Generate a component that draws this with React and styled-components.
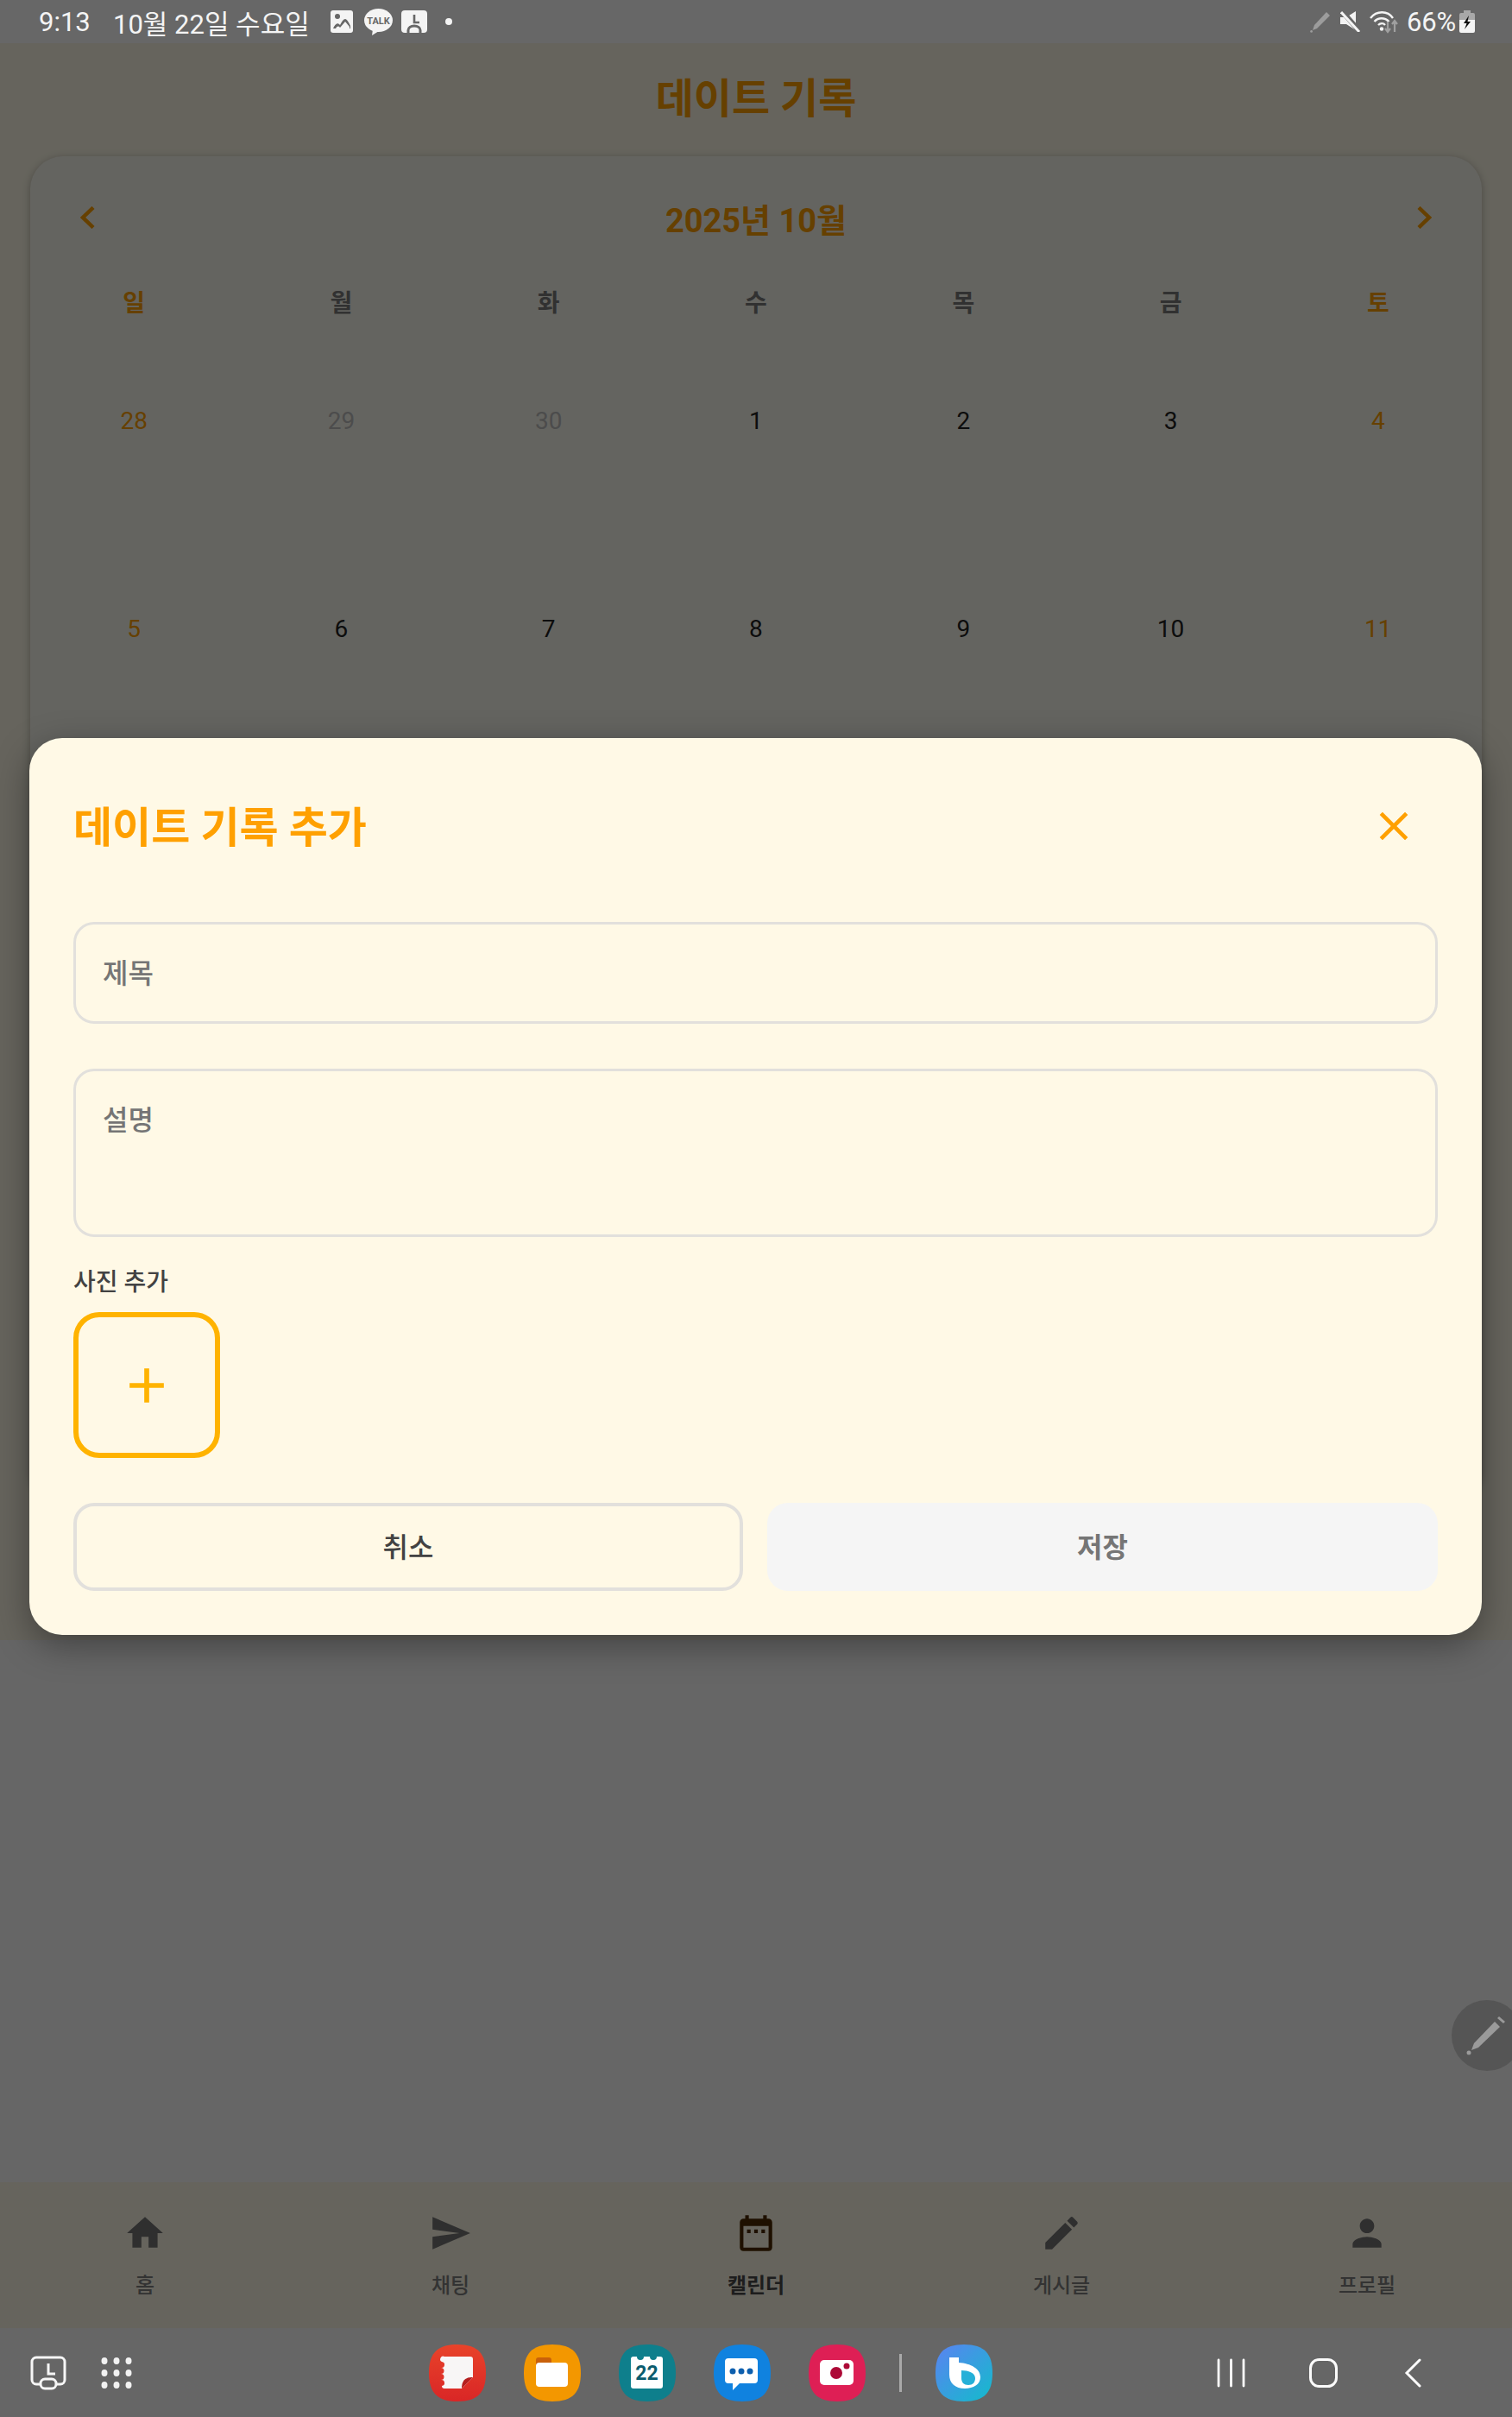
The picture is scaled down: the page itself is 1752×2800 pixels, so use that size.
import styled, { createGlobalStyle } from 'styled-components';

const GlobalStyle = createGlobalStyle`
  html, body {
    margin: 0;
    padding: 0;
    background: #666;
  }
  * {
    box-sizing: border-box;
  }
  body {
    font-family: Roboto, "Noto Sans CJK KR", sans-serif;
  }
`;

const Device = styled.div`
  width: 1752px;
  height: 2800px;
  display: flex;
  flex-direction: column;
  position: relative;
  overflow: hidden;
`;

/* status bar */
const StatusBar = styled.div`
  height: 50px;
  flex: none;
  background: #676767;
  color: #f4f4f4;
  display: flex;
  align-items: center;
  padding: 0 43px 0 45px;
  font-size: 31px;
  font-weight: 400;
`;

const StatusTime = styled.span`
  width: 86px;
`;

const StatusDate = styled.span`
  width: 252px;
  white-space: nowrap;
`;

const StatusIcons = styled.div`
  display: flex;
  align-items: center;
  gap: ${(p) => p.$gap || 10}px;
`;

const StatusRight = styled(StatusIcons)`
  margin-left: auto;
`;

const Percent = styled.span`
  margin: 0 -6px 0 -1px;
  letter-spacing: -0.2px;
`;

/* app screen */
const Screen = styled.div`
  height: 2647px;
  flex: none;
  display: flex;
  flex-direction: column;
  position: relative;
  background: #fff;
`;

const Page = styled.div`
  height: 1850px;
  flex: none;
  background: #fefae8;
  overflow: hidden;
`;

const PageTitle = styled.h1`
  margin: 0;
  height: 131px;
  padding-top: 35px;
  text-align: center;
  font-size: 48px;
  line-height: 60px;
  font-weight: 700;
  color: #ffa000;
`;

const CalendarCard = styled.div`
  margin: 0 35px;
  padding-top: 46px;
  background: #fbfaf0;
  border-radius: 38px;
  box-shadow: 0 2px 10px rgba(0, 0, 0, 0.28);
  height: 1560px;
`;

const CalendarHead = styled.div`
  height: 50px;
  padding: 0 58px;
  margin-bottom: 52px;
  display: flex;
  align-items: center;
  justify-content: space-between;
`;

const Month = styled.div`
  font-size: 38px;
  font-weight: 700;
  color: #ffa000;
`;

const Chevron = styled.svg`
  width: 17px;
  height: 26px;
  fill: none;
  stroke: #ffa000;
  stroke-width: 4.5;
`;

const WeekGrid = styled.div`
  display: grid;
  grid-template-columns: repeat(7, 1fr);
  height: 38px;
  align-items: center;
`;

const WeekDay = styled.div`
  text-align: center;
  font-size: 28px;
  font-weight: 700;
  color: ${(p) => (p.$weekend ? '#ffa000' : '#7a7a7a')};
`;

const DayGrid = styled.div`
  display: grid;
  grid-template-columns: repeat(7, 1fr);
  grid-auto-rows: 241px;
`;

const Day = styled.div`
  display: flex;
  align-items: center;
  justify-content: center;
  font-size: 28px;
  color: ${(p) => p.$color};
`;

const Filler = styled.div`
  flex: 1;
  background: #fff;
`;

const BottomNav = styled.nav`
  height: 169px;
  flex: none;
  background: #fefae8;
  display: grid;
  grid-template-columns: repeat(5, 354px);
  justify-content: center;
`;

const NavItem = styled.div`
  display: flex;
  flex-direction: column;
  align-items: center;
  padding-top: 34px;
  color: ${(p) => (p.$active ? '#4a4a4a' : '#808080')};
  font-size: 24px;
  line-height: 30px;
  font-weight: ${(p) => (p.$active ? 700 : 500)};
`;

const NavIcon = styled.svg`
  width: 50px;
  height: 50px;
  margin-bottom: 21px;
  fill: ${(p) => (p.$active ? '#4c2a00' : '#757575')};
`;

/* dialog */
const Scrim = styled.div`
  position: absolute;
  inset: 0;
  background: rgba(0, 0, 0, 0.6);
  padding: 805px 35px 0 34px;
`;

const Modal = styled.div`
  display: flex;
  flex-direction: column;
  padding: 52px 51px 51px 51px;
  background: #fff9e6;
  border-radius: 38px;
  box-shadow: 0 12px 40px rgba(0, 0, 0, 0.36);
`;

const ModalHead = styled.div`
  height: 100px;
  margin-bottom: 61px;
  display: flex;
  align-items: center;
  justify-content: space-between;
`;

const ModalTitle = styled.h2`
  margin: 0;
  padding-bottom: 5px;
  font-size: 49px;
  font-weight: 700;
  color: #ffa000;
`;

const CloseButton = styled.button`
  width: 102px;
  height: 100px;
  padding: 0;
  border: 0;
  background: none;
  display: flex;
  align-items: center;
  justify-content: center;
`;

const CloseIcon = styled.svg`
  width: 56px;
  height: 56px;
  fill: #ffa000;
`;

const Field = styled.label`
  display: block;
  height: ${(p) => p.$height}px;
  margin-bottom: ${(p) => p.$gap}px;
  padding: 37px 31px 0;
  border: 3px solid #e2e0dc;
  border-radius: 24px;
  font-size: 32px;
  line-height: 40px;
  font-weight: 500;
  color: #757575;
`;

const PhotoLabel = styled.div`
  font-size: 28px;
  line-height: 34px;
  font-weight: 500;
  margin: 36px 0 17px;
  color: #424242;
`;

const AddPhoto = styled.button`
  width: 170px;
  height: 169px;
  padding: 0;
  margin-bottom: 52px;
  border: 6px solid #ffb300;
  border-radius: 30px;
  background: none;
  display: flex;
  align-items: center;
  justify-content: center;
`;

const PlusIcon = styled.svg`
  width: 68px;
  height: 68px;
  fill: #ffb300;
`;

const Actions = styled.div`
  display: grid;
  grid-template-columns: 776px 777px;
  gap: 28px;
`;

const ActionButton = styled.button`
  height: 102px;
  padding: 0 0 5px;
  border-radius: 24px;
  font-family: inherit;
  font-size: 32px;
  font-weight: ${(p) => (p.$ghost ? 500 : 700)};
  border: ${(p) => (p.$ghost ? '4px solid #e2e0dc' : '0')};
  background: ${(p) => (p.$ghost ? 'transparent' : '#f5f5f5')};
  color: ${(p) => (p.$ghost ? '#424242' : '#757575')};
`;

/* s-pen shortcut floats over everything */
const PenBubble = styled.div`
  position: absolute;
  left: 1682px;
  top: 2317px;
  width: 82px;
  height: 82px;
  border-radius: 50%;
  background: #555;
  display: flex;
  align-items: center;
  justify-content: center;
`;

/* samsung dock */
const Dock = styled.div`
  height: 103px;
  flex: none;
  background: #666;
  display: flex;
  align-items: center;
  padding-left: 35px;
`;

const DockTools = styled.div`
  display: flex;
  align-items: center;
  gap: 40px;
  margin-right: 344px;
`;

const DockApps = styled.div`
  display: flex;
  align-items: center;
  gap: 44px;
  margin-right: 260px;
`;

const AppIcon = styled.svg`
  width: 66px;
  height: 66px;
  display: block;
`;

const DockDivider = styled.div`
  width: 3px;
  height: 44px;
  margin: 0 -5px;
  background: #a9a9a9;
`;

const DockNav = styled.div`
  display: flex;
  align-items: center;
  gap: 74px;
`;

const BackIcon = styled.svg`
  margin-left: 3px;
`;

const SQUIRCLE = 'M33 0C57 0 66 11 66 33S57 66 33 66 0 55 0 33 9 0 33 0Z';

const weekDays = ['일', '월', '화', '수', '목', '금', '토'];

const days = [
  28, 29, 30, 1, 2, 3, 4, 5, 6, 7, 8, 9, 10, 11, 12, 13, 14, 15, 16, 17, 18, 19, 20, 21, 22, 23,
  24, 25, 26, 27, 28, 29, 30, 31, 1,
];

const dayColor = (i) => {
  if (i === 1 || i === 2 || i === 34) return '#bdbdbd';
  if (i % 7 === 0 || i % 7 === 6) return '#ffa000';
  return '#212121';
};

const navItems = [
  { label: '홈', d: 'M10 20v-6h4v6h5v-8h3L12 3 2 12h3v8z' },
  { label: '채팅', d: 'M2.01 21 23 12 2.01 3 2 10l15 2-15 2z' },
  {
    label: '캘린더',
    active: true,
    d: 'M19 4h-1V2h-2v2H8V2H6v2H5C3.9 4 3 4.9 3 6v14c0 1.1.9 2 2 2h14c1.1 0 2-.9 2-2V6c0-1.1-.9-2-2-2zm0 16H5V8h14zM7 10h2v2H7zM11 10h2v2h-2zM15 10h2v2h-2z',
  },
  {
    label: '게시글',
    d: 'M3 17.25V21h3.75L17.81 9.94l-3.75-3.75L3 17.25zM20.71 7.04c.39-.39.39-1.02 0-1.41l-2.34-2.34a.996.996 0 0 0-1.41 0l-1.83 1.83 3.75 3.75 1.83-1.83z',
  },
  {
    label: '프로필',
    d: 'M12 12c2.21 0 4-1.79 4-4s-1.79-4-4-4-4 1.79-4 4 1.79 4 4 4zm0 2c-2.67 0-8 1.34-8 4v2h16v-2c0-2.66-5.33-4-8-4z',
  },
];

const Status = () => (
  <StatusBar>
    <StatusTime>9:13</StatusTime>
    <StatusDate>10월 22일 수요일</StatusDate>
    <StatusIcons $gap={13}>
      <svg width="26" height="26" viewBox="0 0 26 26">
        <rect width="26" height="26" rx="3" fill="#f4f4f4" />
        <circle cx="8" cy="7" r="3" fill="#676767" />
        <path d="M3 21c2-5 5-8 8-4 2-4 4-7 6-7s4 4 6 8v3z" fill="#676767" />
        <path d="M6 21c2-3 3-3 5-1l6-7 5 6v2z" fill="#f4f4f4" />
      </svg>
      <svg width="33" height="31" viewBox="0 0 33 31">
        <ellipse cx="16.5" cy="13.5" rx="16.5" ry="13.5" fill="#f4f4f4" />
        <path d="M10 24l-1 7 8-5z" fill="#f4f4f4" />
        <text x="16.5" y="17.5" textAnchor="middle" fontSize="11" fontWeight="700" fontFamily="Roboto" fill="#676767">TALK</text>
      </svg>
      <svg width="30" height="26" viewBox="0 0 30 26" style={{ marginLeft: -3 }}>
        <rect width="30" height="26" rx="4" fill="#f4f4f4" />
        <path d="M15 5v9h6" fill="none" stroke="#676767" strokeWidth="2.6" />
        <path d="M8 26v-3c0-3 3-5 7-5s7 2 7 5v3" fill="#f4f4f4" stroke="#676767" strokeWidth="3" />
      </svg>
      <svg width="8" height="8" viewBox="0 0 8 8" style={{ marginLeft: 8 }}>
        <circle cx="4" cy="4" r="4" fill="#f4f4f4" />
      </svg>
    </StatusIcons>
    <StatusRight>
      <svg width="25" height="26" viewBox="0 0 25 26">
        <path d="M19 2l4 4L8 21l-5 2 2-6z" fill="#9c9c9c" />
        <circle cx="1.6" cy="24.4" r="1.4" fill="#9c9c9c" />
      </svg>
      <svg width="24" height="24" viewBox="0 0 24 24">
        <path d="M0 7h7L18 0v22L7 15H0z" fill="#f4f4f4" />
        <path d="M3 1l20 23" stroke="#676767" strokeWidth="6" />
        <path d="M1 1l21 23" stroke="#f4f4f4" strokeWidth="3" />
      </svg>
      <svg width="34" height="27" viewBox="0 0 34 27" fill="none">
        <path d="M1 9c7-9 20-9 26 0" stroke="#f4f4f4" strokeWidth="2.4" />
        <path d="M5.500 13c4.500-5 12-5 17 0" stroke="#f4f4f4" strokeWidth="2.4" />
        <path d="M10 17c2.500-2.500 6-2.500 8 0" stroke="#f4f4f4" strokeWidth="2.4" />
        <circle cx="14" cy="21.500" r="2.200" fill="#f4f4f4" />
        <path d="M21 13v12m-3-4 3 4 3-4" stroke="#a0a0a0" strokeWidth="2.200" />
        <path d="M29 25V12m-3 4 3-4 3 4" stroke="#a0a0a0" strokeWidth="2.200" />
      </svg>
      <Percent>66%</Percent>
      <svg width="18" height="26" viewBox="0 0 18 26">
        <path d="M5 0h8v3h3a2 2 0 0 1 2 2v6H0V5a2 2 0 0 1 2-2h3z" fill="#a8a8a8" />
        <path d="M0 11h18v13a2 2 0 0 1-2 2H2a2 2 0 0 1-2-2z" fill="#f4f4f4" />
        <path d="M11 6 5 15h3.500L6 22l7-9H9.500z" fill="#111" />
      </svg>
    </StatusRight>
  </StatusBar>
);

const Calendar = () => (
  <CalendarCard>
    <CalendarHead>
      <Chevron viewBox="0 0 17 26">
        <path d="M15 1.500 3 13l12 11.500" />
      </Chevron>
      <Month>2025년 10월</Month>
      <Chevron viewBox="0 0 17 26">
        <path d="M2 1.500 14 13 2 24.500" />
      </Chevron>
    </CalendarHead>
    <WeekGrid>
      {weekDays.map((w, i) => (
        <WeekDay key={w} $weekend={i === 0 || i === 6}>
          {w}
        </WeekDay>
      ))}
    </WeekGrid>
    <DayGrid>
      {days.map((d, i) => (
        <Day key={i} $color={dayColor(i)}>
          {d}
        </Day>
      ))}
    </DayGrid>
  </CalendarCard>
);

const RecordDialog = () => (
  <Scrim>
    <Modal>
      <ModalHead>
        <ModalTitle>데이트 기록 추가</ModalTitle>
        <CloseButton>
          <CloseIcon viewBox="0 0 24 24">
            <path d="M19 6.410 17.590 5 12 10.590 6.410 5 5 6.410 10.590 12 5 17.590 6.410 19 12 13.410 17.590 19 19 17.590 13.410 12z" />
          </CloseIcon>
        </CloseButton>
      </ModalHead>
      <Field $height={118} $gap={52}>제목</Field>
      <Field $height={195} $gap={0}>설명</Field>
      <PhotoLabel>사진 추가</PhotoLabel>
      <AddPhoto>
        <PlusIcon viewBox="0 0 24 24">
          <path d="M19 13h-6v6h-2v-6H5v-2h6V5h2v6h6v2z" />
        </PlusIcon>
      </AddPhoto>
      <Actions>
        <ActionButton $ghost>취소</ActionButton>
        <ActionButton>저장</ActionButton>
      </Actions>
    </Modal>
  </Scrim>
);

const DockBar = () => (
  <Dock>
    <DockTools>
      <svg width="42" height="40" viewBox="0 0 42 40" fill="none" stroke="#f6f6f6" strokeWidth="3">
        <path d="M12 33H7a5 5 0 0 1-5-5V7a5 5 0 0 1 5-5h28a5 5 0 0 1 5 5v21a5 5 0 0 1-5 5h-5" />
        <path d="M21 9v12h8" />
        <rect x="12" y="27" width="18" height="11" rx="5" />
      </svg>
      <svg width="36" height="36" viewBox="0 0 36 36" fill="#f2f2f2">
        <ellipse cx="4" cy="4" rx="3.500" ry="4" />
        <ellipse cx="18" cy="4" rx="3.500" ry="4" />
        <ellipse cx="32" cy="4" rx="3.500" ry="4" />
        <ellipse cx="4" cy="18" rx="3.500" ry="4" />
        <ellipse cx="18" cy="18" rx="3.500" ry="4" />
        <ellipse cx="32" cy="18" rx="3.500" ry="4" />
        <ellipse cx="4" cy="32" rx="3.500" ry="4" />
        <ellipse cx="18" cy="32" rx="3.500" ry="4" />
        <ellipse cx="32" cy="32" rx="3.500" ry="4" />
      </svg>
    </DockTools>
    <DockApps>
      <AppIcon viewBox="0 0 66 66">
        <defs>
          <linearGradient id="notesBg" x1="0" y1="0" x2="0" y2="1">
            <stop offset="0" stopColor="#e8432a" />
            <stop offset="1" stopColor="#d92626" />
          </linearGradient>
        </defs>
        <path d={SQUIRCLE} fill="url(#notesBg)" />
        <path d="M18 14h30a3 3 0 0 1 3 3v21L38 51H18a3 3 0 0 1-3-3 3.500 3.500 0 0 0-1-7 3.500 3.500 0 0 0 0-7 3.500 3.500 0 0 0 0-7 3.500 3.500 0 0 0 1-7 3 3 0 0 1 3-6z" fill="#f8f6f6" />
        <path d="M51 38c-6 0-13 1-13 13z" fill="#b51f1f" />
      </AppIcon>
      <AppIcon viewBox="0 0 66 66">
        <path d={SQUIRCLE} fill="#f39700" />
        <path d="M14 24v-6a3 3 0 0 1 3-3h12a3 3 0 0 1 3 3v6z" fill="#c9610a" />
        <rect x="14" y="21" width="37" height="28" rx="4" fill="#fff" />
      </AppIcon>
      <AppIcon viewBox="0 0 66 66">
        <path d={SQUIRCLE} fill="#0e7f8c" />
        <path d="M17 14h4a4 4 0 0 0 8 0h7a4 4 0 0 0 8 0h4a3 3 0 0 1 3 3v31a3 3 0 0 1-3 3H17a3 3 0 0 1-3-3V17a3 3 0 0 1 3-3z" fill="#fff" />
        <text x="32.500" y="41" textAnchor="middle" fontSize="23" fontWeight="700" fontFamily="Roboto" fill="#0b5c6e">22</text>
      </AppIcon>
      <AppIcon viewBox="0 0 66 66">
        <path d={SQUIRCLE} fill="#1082df" />
        <path d="M17 16h30a4 4 0 0 1 4 4v21a4 4 0 0 1-4 4H30l-8 8v-8h-5a4 4 0 0 1-4-4V20a4 4 0 0 1 4-4z" fill="#fff" />
        <circle cx="22" cy="31" r="3.500" fill="#0d5fae" />
        <circle cx="32" cy="31" r="3.500" fill="#0d5fae" />
        <circle cx="42" cy="31" r="3.500" fill="#0d5fae" />
      </AppIcon>
      <AppIcon viewBox="0 0 66 66">
        <path d={SQUIRCLE} fill="#de1f55" />
        <rect x="13" y="18" width="39" height="29" rx="5" fill="#fff" />
        <circle cx="32" cy="33" r="7" fill="#ad0a37" />
        <circle cx="44" cy="25" r="3.500" fill="#ad0a37" />
      </AppIcon>
      <DockDivider />
      <AppIcon viewBox="0 0 66 66">
        <defs>
          <linearGradient id="bixbyBg" x1="0" y1="0" x2="1" y2="1">
            <stop offset="0" stopColor="#5b82f2" />
            <stop offset="1" stopColor="#12bccb" />
          </linearGradient>
        </defs>
        <path d={SQUIRCLE} fill="url(#bixbyBg)" />
        <path d="M16 15h11v6c14 1 25 7 25 17 0 8-8 13-18 13-11 0-18-6-18-16z" fill="#fff" />
        <path d="M30 30c8 0 16 3 16 9 0 5-3 8-8 8-5 0-8-3-8-8z" fill="#25b0d8" />
      </AppIcon>
    </DockApps>
    <DockNav>
      <svg width="33" height="34" viewBox="0 0 33 34" stroke="#fbfbfb" strokeWidth="2.800" strokeLinecap="round">
        <path d="M2 2v30M16.500 2v30M31 2v30" />
      </svg>
      <svg width="33" height="34" viewBox="0 0 33 34" fill="none" stroke="#fbfbfb" strokeWidth="3">
        <rect x="1.500" y="1.500" width="30" height="31" rx="10" />
      </svg>
      <BackIcon width="20" height="34" viewBox="0 0 20 34" fill="none" stroke="#fbfbfb" strokeWidth="3" strokeLinecap="round">
        <path d="M18 2 3 17l15 15" />
      </BackIcon>
    </DockNav>
  </Dock>
);

const App = () => (
  <Device>
    <GlobalStyle />
    <Status />
    <Screen>
      <Page>
        <PageTitle>데이트 기록</PageTitle>
        <Calendar />
      </Page>
      <Filler />
      <BottomNav>
        {navItems.map((item) => (
          <NavItem key={item.label} $active={item.active}>
            <NavIcon viewBox="0 0 24 24" $active={item.active}>
              <path d={item.d} />
            </NavIcon>
            {item.label}
          </NavItem>
        ))}
      </BottomNav>
      <RecordDialog />
    </Screen>
    <PenBubble>
      <svg width="50" height="50" viewBox="0 0 50 50" style={{ marginLeft: -2 }}>
        <path d="M35 9l6 6-25 24-8 3 3-8z" fill="#9a9a9a" />
        <path d="M38 5l2-2 7 6-2 2z" fill="#9a9a9a" />
        <circle cx="5" cy="45" r="2.500" fill="#9a9a9a" />
      </svg>
    </PenBubble>
    <DockBar />
  </Device>
);

export default App;
